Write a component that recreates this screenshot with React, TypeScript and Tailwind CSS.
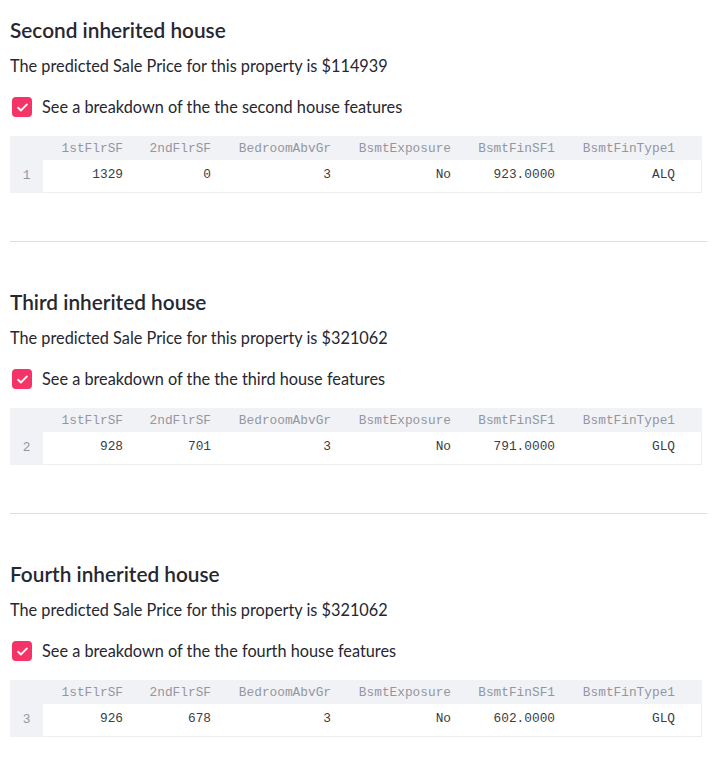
const columns = [
  { name: "1stFlrSF", w: "w-[90px]" },
  { name: "2ndFlrSF", w: "w-[88px]" },
  { name: "BedroomAbvGr", w: "w-[120px]" },
  { name: "BsmtExposure", w: "w-[120px]" },
  { name: "BsmtFinSF1", w: "w-[104px]" },
  { name: "BsmtFinType1", w: "w-[120px]" },
];

const houses = [
  {
    title: "Second inherited house",
    price: "$114939",
    label: "second",
    index: "1",
    values: ["1329", "0", "3", "No", "923.0000", "ALQ"],
  },
  {
    title: "Third inherited house",
    price: "$321062",
    label: "third",
    index: "2",
    values: ["928", "701", "3", "No", "791.0000", "GLQ"],
  },
  {
    title: "Fourth inherited house",
    price: "$321062",
    label: "fourth",
    index: "3",
    values: ["926", "678", "3", "No", "602.0000", "GLQ"],
  },
];

function CheckBox() {
  return (
    <div className="w-5 h-5 rounded-[4px] bg-[#f63366] flex items-center justify-center">
      <svg width="13" height="13" viewBox="0 0 24 24" fill="none">
        <path
          d="M4 12.5l5 5L20 6.5"
          stroke="white"
          strokeWidth="3.4"
          strokeLinecap="round"
          strokeLinejoin="round"
        />
      </svg>
    </div>
  );
}

function FeatureTable({ index, values }: { index: string; values: string[] }) {
  const mono = { fontFamily: '"Liberation Mono", "DejaVu Sans Mono", monospace' };
  return (
    <div className="mt-[17px] mr-[10px] text-[12.8px]" style={mono}>
      <div className="flex h-[24px] bg-[#f0f2f6] items-center text-[#94969f] pt-[1px]">
        <div className="w-[33px]" />
        {columns.map((c) => (
          <div key={c.name} className={`${c.w} text-right pr-[10px]`}>
            {c.name}
          </div>
        ))}
        <div className="flex-1" />
      </div>
      <div className="flex h-[33px]">
        <div className="w-[33px] bg-[#f0f2f6] flex items-center justify-center text-[#94969f] pb-[1px]">
          {index}
        </div>
        <div className="flex flex-1 items-center border-b border-r border-[#eceef2] text-[#3a3c47] pb-[3px]">
          {columns.map((c, i) => (
            <div key={c.name} className={`${c.w} text-right pr-[10px]`}>
              {values[i]}
            </div>
          ))}
          <div className="flex-1" />
        </div>
      </div>
    </div>
  );
}

export default function App() {
  return (
    <div
      className="w-[712px] h-[778px] bg-white pl-[10px] pt-[8px] overflow-hidden"
      style={{ fontFamily: 'Lato, "Liberation Sans", sans-serif' }}
    >
      {houses.map((h, i) => (
        <section key={h.title}>
          {i > 0 && <div className="h-px bg-[#dcdcdc] mr-[5px] mt-[48px] mb-[38px]" />}
          <h2 className="h-[44px] flex items-center text-[20.8px] font-semibold text-[#262730]">
            {h.title}
          </h2>
          <p className="h-[28px] flex items-center text-[16.3px] text-[#262730]">
            The predicted Sale Price for this property is {h.price}
          </p>
          <div className="mt-[15px] h-[24px] flex items-center gap-[10px] pl-[2px] text-[16.3px] text-[#262730]">
            <CheckBox />
            <span>See a breakdown of the the {h.label} house features</span>
          </div>
          <FeatureTable index={h.index} values={h.values} />
        </section>
      ))}
    </div>
  );
}
